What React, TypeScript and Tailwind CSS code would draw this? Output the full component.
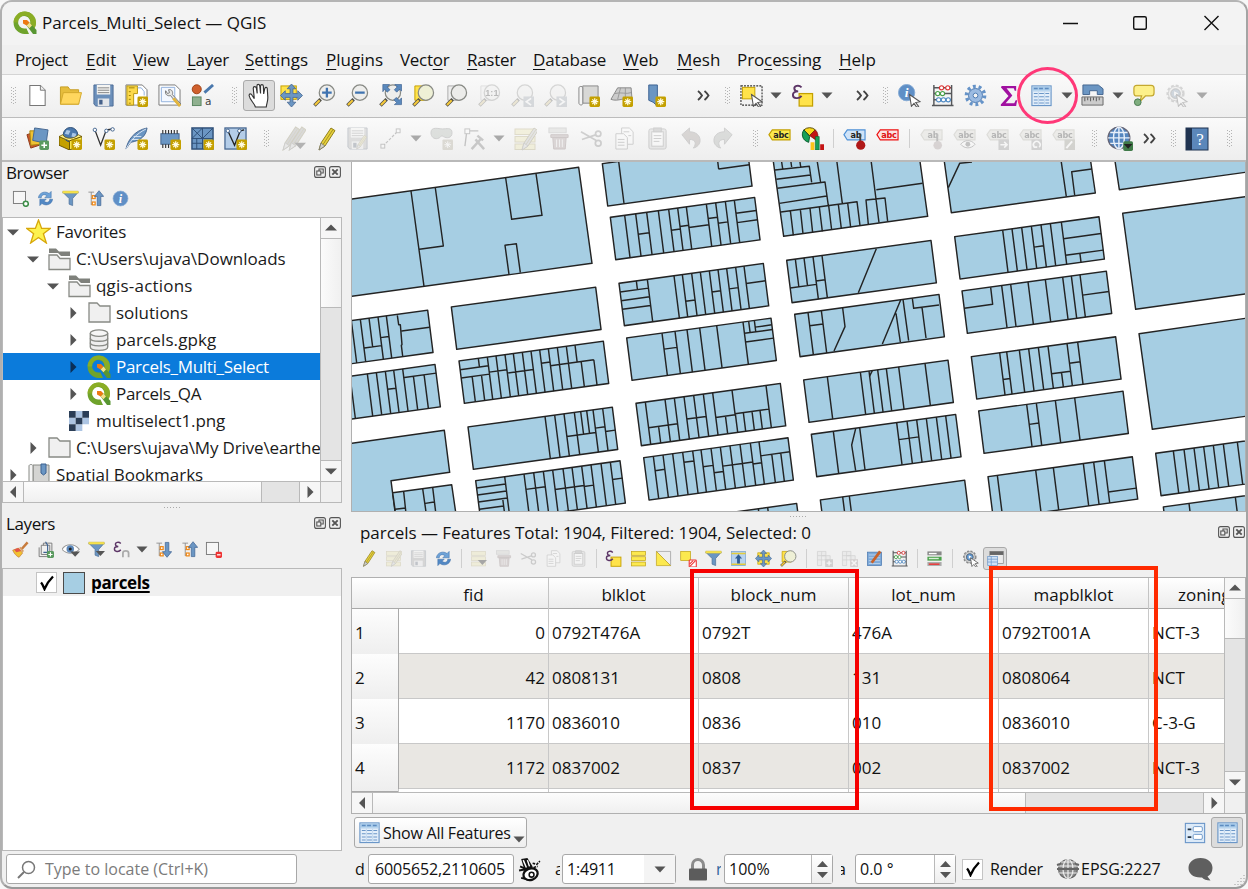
import React from "react";

type V = number | [number, number, number];
type Block = [number, number, V[], [number, number, number][]?];

const BLUE = "#6b96c3";
const GREY = "#888a85";

/* ---------- shared drawing pieces ---------- */

function Ic({ s = 24, dim = false, children, className = "" }: { s?: number; dim?: boolean; children: React.ReactNode; className?: string }) {
  return (
    <svg width={s} height={s} viewBox="0 0 24 24" fill="none" className={`shrink-0 ${dim ? "opacity-30 grayscale-[.6]" : ""} ${className}`}>
      {children}
    </svg>
  );
}
const Badge = () => (
  <g>
    <rect x="13" y="13" width="11" height="11" rx="1.5" fill="#c4a000" />
    <path d="M18.5 14.8v7.4M14.8 18.5h7.4M16 16l5 5M21 16l-5 5" stroke="#fffbe0" strokeWidth="1.3" />
  </g>
);
const Lens = ({ children, fill = "#eeeeec" }: { children?: React.ReactNode; fill?: string }) => (
  <g>
    <path d="M1.500 22.500l6.500-6.500" stroke="#4b4b48" strokeWidth="3.600" />
    <path d="M2 22l5-5" stroke="#f5c93a" strokeWidth="2.2" />
    <circle cx="14.500" cy="9" r="8" fill={fill} stroke={GREY} strokeWidth="1.300" />
    {children}
  </g>
);
const Pencil = ({ c = "#e8d13c" }: { c?: string }) => (
  <g>
    <path d="M5 23l2-7L17 1l4 2.600L11 19z" fill={c} stroke="#8f7f1e" strokeWidth="1" />
    <path d="M5 23l2-7 4 3z" fill="#cfcfca" stroke="#77776f" strokeWidth=".8" />
    <path d="M9 17.500L19 2.500" stroke="#9a8a20" strokeWidth=".9" />
  </g>
);
const Wrap = ({ children, t }: { children: React.ReactNode; t: string }) => <g transform={t}>{children}</g>;
const Floppy = ({ c = "#6b8fba" }: { c?: string }) => (
  <g>
    <path d="M2 1h20v22H4l-2-2z" fill={c} stroke="#4d6c96" />
    <path d="M5 1h14v10H5z" fill="#f4f4f2" />
    <path d="M6 4h12M6 6.500h12M6 9h12" stroke="#777" strokeWidth=".9" />
    <path d="M6 15h12v8H6z" fill="#e3e6ea" />
    <path d="M7.500 16.500h3.500v5H7.500z" fill="#45618a" />
  </g>
);
const TableIc = () => (
  <g>
    <rect x="2" y="2" width="20" height="20.500" fill="#e4effa" stroke="#6a96c8" strokeWidth="1.200" />
    <rect x="2.600" y="2.600" width="18.800" height="4.400" fill="#a8cbea" />
    <path d="M4 4.800h4M9.500 4.800h4M15.500 4.800h4" stroke="#5e8cc0" strokeWidth="1.600" />
    <path d="M4 10h4M4 13.300h4M4 16.600h4M4 19.800h4M9.500 10h5M9.500 13.300h5M9.500 16.600h5M9.500 19.800h5M16 10h4M16 13.300h4M16 16.600h4M16 19.800h4" stroke="#6a96c8" strokeWidth="1.100" />
    <path d="M2 7.600h20M8.800 8v14M15.200 8v14" stroke="#b6d0ea" strokeWidth=".7" />
  </g>
);
const Abacus = () => (
  <g>
    <path d="M3 1v22M21.500 1v22M1 22.500h22.500M3 4h18M3 10h18M3 16.500h18" stroke="#55575a" strokeWidth="1.500" />
    <g fill="#fff" strokeWidth="1.200">
      <g stroke="#d33"><ellipse cx="11" cy="4" rx="2.200" ry="2.200" /><ellipse cx="17.500" cy="4" rx="2.200" ry="2.200" /></g>
      <g stroke="#4aa04a"><ellipse cx="7" cy="10" rx="2.200" ry="2.200" /><ellipse cx="12" cy="10" rx="2.200" ry="2.200" /></g>
      <g stroke="#4f8ac4"><ellipse cx="8" cy="16.500" rx="2.300" ry="2.200" /><ellipse cx="13" cy="16.500" rx="2.300" ry="2.200" /><ellipse cx="18" cy="16.500" rx="2.200" ry="2.200" /></g>
    </g>
  </g>
);
const Tag = ({ fill, stroke, text, tc = "#222" }: { fill: string; stroke: string; text: string; tc?: string }) => (
  <g>
    <path d="M1 8l3.500-5H23v10.500H4.500z" fill={fill} stroke={stroke} strokeWidth="1.200" />
    <text x="13.500" y="11" textAnchor="middle" fontSize="8.500" fontWeight="700" fontFamily="DejaVu Sans, sans-serif" letterSpacing="-.3" fill={tc}>{text}</text>
  </g>
);
const Arrow = ({ d = false }: { d?: boolean }) => (
  <svg width="12" height="7" viewBox="0 0 12 7" className="shrink-0">
    <path d="M.5.500h11L6 6.500z" fill={d ? "#a9a9a9" : "#555"} />
  </svg>
);
const Chev = () => (
  <svg width="13" height="11" viewBox="0 0 13 11" fill="none" className="shrink-0">
    <path d="M1 1c2 1.500 3 3 4 4.500-1 1.500-2 3-4 4.500M7.500 1c2 1.500 3 3 4 4.500-1 1.500-2 3-4 4.500" stroke="#444" strokeWidth="1.900" />
  </svg>
);
const Grip = () => (
  <svg width="5" height="17" viewBox="0 0 5 17" className="shrink-0">
    <path d="M.5 0v17M2.500 1v16M4.500 0v17" stroke="#b4b4b4" strokeWidth="1" strokeDasharray="1 2" fill="none" />
  </svg>
);
const Dots = () => (
  <svg width="17" height="3" viewBox="0 0 17 3">
    <path d="M0 1.500h17" stroke="#aaa" strokeDasharray="1 2" />
  </svg>
);
const Cursor = () => <path d="M12 11l11 7.500-4.500.800 3 4-1.800 1.200-3-4.200-2.700 3z" fill="#fff" stroke="#555" strokeWidth="1.100" />;
const Refresh = () => (
  <g>
    <path d="M2 11C3 3 12 1 17 5l3-3v9h-9l3-3c-4-3-8-1-8 3z" fill="#6ea3d8" stroke="#3f72ab" strokeWidth=".8" />
    <path d="M22 13c-1 8-10 10-15 6l-3 3v-9h9l-3 3c4 3 8 1 8-3z" fill="#5288c4" stroke="#3f72ab" strokeWidth=".8" />
  </g>
);
const Funnel = () => (
  <g>
    <path d="M1 3h22l-8 9v10l-5-2v-8z" fill="#6b96c3" stroke="#4d7099" />
    <path d="M1 1.500h22v3H1z" fill="#fce94f" stroke="#c9b33a" strokeWidth=".6" />
  </g>
);
const EpsSel = () => (
  <g>
    <rect x="8.500" y="10" width="14" height="13" fill="#ffe34a" stroke="#c4a000" strokeWidth="1.300" />
    <path d="M11 3.500C8 .500 3 2 3.500 5c.3 2 2 2.700 4 2.700-3 0-5.500 1-5.500 3.700 0 4 6.500 4.500 9 1" stroke="#5c3566" strokeWidth="2" />
  </g>
);
const PanArrows = () => (
  <path d="M12 0l4.500 5h-3v5h5V7l5 5-5 5v-3h-5v5h3L12 24l-4.500-5h3v-5h-5v3l-5-5 5-5v3h5V5h-3z" fill={BLUE} stroke="#44658f" strokeWidth=".8" />
);
const Rows = () => (
  <g fill="#fce94f" stroke="#bfa21a"><rect x="2" y="2" width="20" height="5.500" /><rect x="2" y="9.500" width="20" height="5.500" /><rect x="2" y="17" width="20" height="5.500" /></g>
);
const Trash = () => (
  <g fill="#b98d8d" stroke="#8f5f5f"><rect x="2" y="1" width="18" height="5" fill="#c9c9c0" stroke="#999" /><path d="M4 8h18v3H4zM6 11h14l-1 12H7z" /><path d="M10 13v8M13 13v8M16 13v8" stroke="#eee" /></g>
);
const Scissors = () => (
  <g stroke="#777" strokeWidth="1.800"><path d="M1 5l16 9M2 13l15-5" /><circle cx="19" cy="7" r="2.800" /><circle cx="19" cy="17" r="3" /></g>
);
const Copy = () => (
  <g fill="#fff" stroke="#777"><path d="M9 1h8l4 4v13H9z" /><path d="M3 7h8l4 4v12H3z" /><path d="M5 13h7M5 16h7M5 19h7M11 5h6M16 9h3" /></g>
);
const Paste = () => (
  <g fill="#fff" stroke="#777"><rect x="3" y="2" width="18" height="21" rx="2" fill="#ccc" /><rect x="6" y="5" width="12" height="15" /><rect x="8" y="1" width="8" height="4" fill="#999" /><path d="M8 9h8M8 12h8M8 15h6" /></g>
);
const ActGear = () => (
  <g>
    <circle cx="11" cy="10" r="8.500" fill="#dfe6ee" stroke="#888" strokeWidth="2" strokeDasharray="3 2" />
    <circle cx="11" cy="10" r="7.500" fill="#e6e6e6" stroke="#888" />
    <circle cx="11" cy="10" r="5" fill="#5c95cf" stroke="#555" /><path d="M9.500 7.500l4.500 2.500-4.500 2.500z" fill="#fff" />
    <Cursor />
  </g>
);
const TreeMark = () => (
  <g><path d="M2 3h8M6 3v18M6 12h5M6 20h5" stroke="#888" strokeWidth="1.200" /><rect x="7.500" y="8" width="4" height="4" fill="#fff" stroke="#f08a1a" strokeWidth="1.800" /><rect x="7.500" y="17" width="4" height="4" fill="#fff" stroke="#f08a1a" strokeWidth="1.800" /></g>
);
const UpArrow = () => <path d="M17 1l6.500 8h-4v13h-5V9h-4z" fill={BLUE} stroke="#3d6292" />;
const QLogo = ({ s = 24 }: { s?: number }) => (
  <Ic s={s}>
    <path d="M16 23H11.500A11.200 11.200 0 1 1 23 11.500c0 2.500-.6 4.300-1.800 6l-4.200-4a6.200 6.200 0 1 0-5.500 4h2z" fill="#6fa32c" />
    <path d="M11.500.600A11 11 0 0 1 23 11.500c0 2.500-.6 4.300-1.800 6l-4.200-4a6.200 6.200 0 1 0-11.700-2H.500A11 11 0 0 1 11.500.600z" fill="#93b023" fillOpacity=".75" />
    <path d="M12.500 13l4-1.500L23.500 19v4H20z" fill="#589632" />
    <path d="M10 9h4l2.500 2.600-2.800 2.900L10 12.500z" fill="#ee7913" />
    <path d="M13.700 14.500l2.800-2.900 2.500 2.900-2.600 2.800z" fill="#f5df8a" />
  </Ic>
);

/* ---------- toolbar cells ---------- */

const C = ({ children, className = "w-[33px]" }: { children?: React.ReactNode; className?: string }) => (
  <div className={`flex shrink-0 items-center justify-center ${className}`}>{children}</div>
);
const I = ({ children, dim }: { children: React.ReactNode; dim?: boolean }) => (
  <C><Ic s={23} dim={dim}>{children}</Ic></C>
);

function Toolbar1() {
  return (
    <div className="flex h-[43px] shrink-0 items-center border-b border-[#bcbcbc] bg-gradient-to-b from-[#fafafa] to-[#eeeeee] pb-px">
      <C className="w-[19px] pl-[3px]"><Grip /></C>
      <I><path d="M4 1.500h11l5 5V22.500H4z" fill="#fff" stroke="#777" strokeWidth="1.100" /><path d="M15 1.500v5h5" stroke="#777" fill="#eee" /></I>
      <I><path d="M1.500 3h8l2 3h9v15h-19z" fill="#e6bd3c" stroke="#c79e25" /><path d="M4.500 9h19l-3 12h-19z" fill="#ffd75e" stroke="#d3a92d" /></I>
      <I><Floppy /></I>
      <I><path d="M1 1h17l5 5v16H1z" fill="#fff" stroke="#777" /><path d="M2 2h11v8H9v12H2z" fill="#fcd94a" stroke="#b8960a" /><path d="M4 4h6M4 8h2M4 12h2M4 16h2M4 20h2" stroke="#9c7e08" /><path d="M13 4h4l3 4v4" stroke="#8fb0dc" /><Badge /></I>
      <I><path d="M1 1h17l5 5v16H1z" fill="#fff" stroke="#777" /><path d="M3.500 3.500h14v15h-14z" stroke="#8fb0dc" fill="#f4f8ff" /><path d="M8 7c-1 4 2 6 5 5l9 11 2-2-9-10c1-3-1-6-4-5l1 3-2 1z" fill="#e8e8e6" stroke="#777" /><path d="M16 15l7 8" stroke="#e3b53c" strokeWidth="3" /></I>
      <I><circle cx="6" cy="5.500" r="4.700" fill="#d0602d" stroke="#a04418" /><path d="M14 9l9-8" stroke="#4a78ad" strokeWidth="3" /><rect x="1.500" y="13.500" width="9" height="9" fill="#8fb08f" stroke="#5a8560" /><text x="14.500" y="22" fontSize="11" fill="#444" fontFamily="DejaVu Sans, sans-serif">a</text></I>
      <C className="w-[24px] pl-[6px]"><Grip /></C>
      <C className="h-[31px] w-[32px] rounded-[3px] border border-[#a9a9a9] bg-[#dcdcdc]">
        <Ic s={25}><path d="M8 23c-1-4-5-6-6-11 0-2 2-2 3 0l2 3-1-10c0-2 2.500-2 3 0l.8 5L9.500 3c0-2.200 2.500-2.200 2.800 0l.7 7V3c.2-2 2.500-1.700 2.700 0l.3 7.500 1-5c.5-2 2.700-1.500 2.500.5L20 14c0 4-1 5-1.500 9z" fill="#fff" stroke="#333" strokeWidth="1.100" /></Ic>
      </C>
      <I><rect x="1" y="2" width="16" height="14" fill="#ffe34a" stroke="#c4a000" /><PanArrows /></I>
      <I><Lens><path d="M14.500 4v10M9.500 9h10" stroke="#3f73b0" strokeWidth="2.400" /></Lens></I>
      <I><Lens><path d="M9.500 9h10" stroke="#3f73b0" strokeWidth="2.400" /></Lens></I>
      <I><Lens /><g fill="#5a89bd" stroke="#3d6292" strokeWidth=".7"><path d="M4 .500h7L8.500 3l3 3-3 2.500-2.500-3L4 8z" /><path d="M23.500.500h-7L19 3l-3 3 2.500 2.500 3-3 2 2z" /><path d="M23.500 21.500v-7L21 17l-3-3-2.500 2.500 3 3-2.500 2z" /></g></I>
      <I><path d="M3 2h13v15H3z" fill="#ffe34a" stroke="#c4a000" /><Lens fill="#eef0d6" /></I>
      <I><path d="M3 2h13v15H3z" fill="#eee" stroke="#aaa" /><Lens fill="#ececea" /></I>
      <I dim><path d="M3 2h13v15H3z" fill="#eee" stroke="#aaa" /><Lens /><text x="14.500" y="12.500" textAnchor="middle" fontSize="9.500" fontWeight="700" fill="#333" fontFamily="Liberation Sans">1:1</text></I>
      <I dim><Lens /><path d="M13 13h11v11H13z" fill="#8ba0b8" /><path d="M21 15l-5 3.500 5 3.500" stroke="#fff" strokeWidth="1.800" /></I>
      <I dim><Lens /><path d="M13 13h11v11H13z" fill="#8ba0b8" /><path d="M16 15l5 3.500-5 3.500" stroke="#fff" strokeWidth="1.800" /></I>
      <I><path d="M6 2h16v18H6z" fill="#d8d8d6" stroke="#888" /><path d="M2 4c0-2 4-2 4 0v16c0 3-4 2-4 0z" fill="#f4f4f4" stroke="#888" /><Badge /></I>
      <I><path d="M1 16L8 4h14l1 12c-6-3-15 3-22 0z" fill="#ccc" stroke="#888" /><path d="M5 10c6-2 12 1 17-1M11 4L8 16M16 4v11" stroke="#999" /><Badge /></I>
      <I><path d="M6 1h9v22l-4.500-4-4.500-2z" fill={BLUE} stroke="#3d6292" /><Badge /></I>
      <C className="ml-4 w-8"><Chev /></C>
      <C className="w-4"><Grip /></C>
      <I><rect x="1" y="2" width="22" height="20" stroke="#333" strokeWidth="1.200" strokeDasharray="2 1.200" /><rect x="2.500" y="3.500" width="13" height="12" fill="#ffe34a" stroke="#c4a000" /><Cursor /></I>
      <C className="w-4"><Arrow /></C>
      <C className="w-[36px]"><Ic s={23}><EpsSel /></Ic></C>
      <C className="w-[14px]"><Arrow /></C>
      <C className="ml-3 w-8"><Chev /></C>
      <C className="w-[15px]"><Grip /></C>
      <I><circle cx="9" cy="9" r="8.500" fill="#5f8fc6" stroke="#86abd4" /><text x="9" y="14" textAnchor="middle" fontSize="14" fontStyle="italic" fontWeight="700" fontFamily="Liberation Serif" fill="#fff">i</text><Cursor /></I>
      <I><Abacus /></I>
      <I><circle cx="12" cy="12" r="9.500" stroke="#6593c8" strokeWidth="3.600" strokeDasharray="3 2.970" /><circle cx="12" cy="12" r="7.300" fill="#9bbbe2" stroke="#4a78b0" /><circle cx="12" cy="12" r="2.500" fill="#f4f4f4" stroke="#4a78b0" /></I>
      <I><path d="M5 2h15v5h-1.500l-1-2.500H10l6 7.500-7 8h9l1.500-3H21l-1 6H4v-1.500l8-9L4 3.500z" fill="#a010a0" /></I>
      <I><TableIc /></I>
      <C className="w-[18px]"><Arrow /></C>
      <I><path d="M2 1h16l5 4v6h-6V7H9v4H2z" fill={BLUE} stroke="#44658f" /><path d="M1 13.500h22v8.500H1z" fill="#ccc" stroke="#666" /><path d="M4 14v4M7 14v3M10 14v4M13 14v3M16 14v4M19 14v3" stroke="#555" /></I>
      <C className="w-[18px]"><Arrow /></C>
      <I><path d="M5 1.500h15c2.500 0 3 1 3 3v5c0 2-1 3-3 3h-6l-6 6 2-6H5c-2 0-3-1-3-3v-5c0-2 1-3 3-3z" fill="#fdf08a" stroke="#c4a830" strokeWidth="1.300" /><circle cx="6" cy="19" r="3.500" fill="#7fae7f" stroke="#4a7a50" /></I>
      <I dim><ActGear /></I>
      <C className="w-[18px]"><Arrow d /></C>
    </div>
  );
}

const Sep = ({ className = "w-[23px]" }: { className?: string }) => (
  <C className={className}><div className="h-[19px] w-px bg-[#cfcfcf]" /></C>
);

function Toolbar2() {
  return (
    <div className="flex h-[44px] shrink-0 items-center border-b-2 border-[#b9b9b9] bg-gradient-to-b from-[#fafafa] to-[#eeeeee] pb-px">
      <C className="w-[19px] pl-[3px]"><Grip /></C>
      <I><path d="M1 8l9-3 4 14-9 3z" fill="#c8582b" stroke="#8e3b18" /><path d="M4 4l10 0 1 14-10 1z" fill="#f0c232" stroke="#a8850f" /><path d="M9 1l14 2-2 14-14-3z" fill={BLUE} stroke="#44658f" /><rect x="14" y="14" width="10" height="10" rx="1.500" fill="#5a9a5f" /><path d="M19 16v6M16 19h6" stroke="#fff" strokeWidth="1.600" /></I>
      <I><path d="M0 10l11 4v10L0 19z" fill="#c4a000" stroke="#6a5500" /><circle cx="12" cy="8" r="7.500" fill="#4a78ad" stroke="#2d4d75" /><path d="M8 3l4 1-2 4-4-1zM14 6l4 1-1 4-4-1z" fill="#a9c6e6" /><path d="M0 10l4-2c2 5 12 5 16 0l4 2-13 4.500z" fill="#fdf08a" stroke="#6a5500" strokeWidth=".8" /><path d="M11 14.500L24 10v9l-13 5z" fill="#fce94f" stroke="#6a5500" /><Badge /></I>
      <I><path d="M3 3l6 16 6-16 7-1" stroke="#333" strokeWidth="1.400" /><path d="M14 3h8" stroke="#333" strokeDasharray="2 1" /><g fill="#fff" stroke="#44658f"><circle cx="3" cy="3" r="1.800" /><circle cx="15" cy="4" r="1.800" /><circle cx="21.500" cy="2.500" r="1.800" /></g><Badge /></I>
      <I><path d="M1 23C3 14 9 4 23 1c-1 8-6 13-17 15z" fill={BLUE} stroke="#44658f" /><path d="M1 23C6 14 12 7 22 2M9 10h8M7 13h8" stroke="#dce8f6" /><Badge /></I>
      <I><rect x="3" y="7" width="19" height="11" fill={BLUE} stroke="#44658f" /><path d="M5 3v4M8 3v4M11 3v4M14 3v4M17 3v4M20 3v4M5 18v4M8 18v4M11 18v4" stroke="#333" strokeWidth="1.200" /><Badge /></I>
      <I><rect x="1" y="1" width="22" height="22" fill={BLUE} stroke="#2f4f77" strokeWidth="1.500" /><path d="M12 1v22M1 12h22M1 1l11 11M12 1L1 12M12 12L23 1M1 17h11M6 12v11" stroke="#2f4f77" /><Badge /></I>
      <I><rect x="1" y="1" width="22" height="22" fill="#b4cde8" stroke="#44658f" strokeWidth="1.300" /><path d="M4 4l7 15 6-15 4-1" stroke="#222" strokeWidth="1.400" /><g fill="#fff" stroke="#44658f"><circle cx="4" cy="4" r="1.800" /><circle cx="16" cy="4" r="1.800" /></g><Badge /></I>
      <C className="w-[24px] pl-[5px]"><Grip /></C>
      <C className="w-[35px]"><Ic s={25} dim><Wrap t="translate(-3,0)"><Pencil c="#999" /></Wrap><Wrap t="translate(3,0)"><Pencil c="#999" /></Wrap><path d="M13 16h11l-5.500 6z" fill="#222" /></Ic></C>
      <C className="w-[30px]"><Ic s={24}><Pencil /></Ic></C>
      <I dim><Floppy c="#aaa" /><Wrap t="translate(8,8) scale(.65)"><Pencil /></Wrap></I>
      <I dim><path d="M4 20L20 4" stroke="#555" strokeWidth="1.200" strokeDasharray="3 1.500" /><g fill="#fff" stroke="#555"><rect x="2" y="18" width="4" height="4" /><rect x="18" y="2" width="4" height="4" /></g></I>
      <C className="w-[18px]"><Arrow d /></C>
      <I dim><path d="M1 6c0-7 8-4 12-4s10-2 10 4-6 6-9 4-2 1-6 2S1 10 1 6z" fill="#9ab0a0" stroke="#777" /><rect x="13" y="13" width="11" height="11" rx="1" fill="#b0a070" /><path d="M18.500 15v7M15 18.500h7M16 16l5 5M21 16l-5 5" stroke="#fff" /></I>
      <I dim><path d="M4 4h12M4 4L2 20" stroke="#555" strokeWidth="1.400" /><rect x="2" y="2" width="5" height="5" fill="#fff" stroke="#555" /><path d="M9 23L19 12M13 13l9 10M15 9l6 5" stroke="#666" strokeWidth="2.600" /></I>
      <C className="w-[16px]"><Arrow d /></C>
      <C className="w-[35px]"><Ic s={24} dim><Rows /><Wrap t="translate(4,0)"><Pencil c="#bbb" /></Wrap></Ic></C>
      <I dim><Trash /></I>
      <I dim><Scissors /></I>
      <I dim><Copy /></I>
      <I dim><Paste /></I>
      <I dim><path d="M3 9l8-7v4c7 0 11 4 11 9 0 4-3 7-7 8 3-4 3-9-4-9v5z" transform="translate(0,-1)" fill="#a08a80" stroke="#777" /></I>
      <I dim><path d="M21 9l-8-7v4C6 6 2 10 2 15c0 4 3 7 7 8-3-4-3-9 4-9v5z" transform="translate(0,-1)" fill="#9aa59a" stroke="#777" /></I>
      <C className="w-[23px] pl-[8px]"><Grip /></C>
      <I><Tag fill="#fce94f" stroke="#c4a000" text="abc" /></I>
      <I><path d="M9 9L3 3a9 9 0 0 1 12 0z" fill="#f8d91c" stroke="#5a4a00" /><path d="M9 9l6-6a8 8 0 0 1 1 11z" fill="#c41414" stroke="#600" strokeWidth=".6" /><path d="M9 10L3 3C0 7 1 14 8 16z" fill="#18a058" stroke="#0a5a2c" /><path d="M10 16h4v8h-4z" fill="#fcc419" /><path d="M15 10h4v14h-4z" fill="#18a058" stroke="#0a5a2c" strokeWidth=".6" /><path d="M20 18h4v6h-4z" fill="#c41414" /></I>
      <Sep className="w-[9px]" />
      <I><Tag fill="#cfe3f8" stroke="#4d90d6" text="ab" /><path d="M18 7v9" stroke="#444" strokeWidth="2" /><circle cx="18.500" cy="19" r="4.800" fill="#b01818" /></I>
      <I><Tag fill="#fbe3e3" stroke="#ee1111" text="abc" tc="#e01010" /></I>
      <Sep className="w-[11px]" />
      <I dim><Tag fill="#d8d6c0" stroke="#aaa68a" text="ab" /><path d="M18 7v9" stroke="#444" strokeWidth="2" /><circle cx="18.500" cy="19" r="4.500" fill="#a88" /></I>
      <I dim><Tag fill="#d8d6c0" stroke="#aaa68a" text="abc" /><path d="M8 18c4-5 11-5 15 0-4 5-11 5-15 0z" fill="#fff" stroke="#555" /><circle cx="15.500" cy="18" r="2.500" fill="#555" /></I>
      <I dim><Tag fill="#d8d6c0" stroke="#aaa68a" text="abc" /><rect x="13" y="13" width="11" height="11" fill="#888" /><path d="M15 18.500h7M19 15.500l3 3-3 3" stroke="#fff" strokeWidth="1.600" /></I>
      <I dim><Tag fill="#d8d6c0" stroke="#aaa68a" text="abc" /><rect x="13" y="13" width="11" height="11" fill="#888" /><path d="M16 21a3.500 3.500 0 1 1 5 0M15 18l1 3h3" stroke="#fff" strokeWidth="1.600" /></I>
      <I dim><Tag fill="#d8d6c0" stroke="#aaa68a" text="abc" /><rect x="13" y="13" width="11" height="11" fill="#8f8c70" /><path d="M15 22l6-7" stroke="#fff" strokeWidth="2" /></I>
      <C className="w-[24px] pl-[5px]"><Grip /></C>
      <C className="w-[31px]"><Ic s={26}><circle cx="11" cy="11" r="10" fill="#5586bf" stroke="#667" strokeWidth="1.300" /><path d="M11 1v20M1 11h20M3 6h16M3 16h16" stroke="#e8f0fa" strokeWidth="1.300" /><ellipse cx="11" cy="11" rx="5" ry="10" stroke="#e8f0fa" strokeWidth="1.300" /><rect x="15" y="14" width="9" height="9" rx="1.500" fill="#3f7a48" /><path d="M15.500 16.500h8l-4 4.500z" fill="#222" /></Ic></C>
      <C className="w-[28px]"><Chev /></C>
      <C className="w-[20px]"><Grip /></C>
      <C className="w-[28px]"><Ic s={24}><rect x="1" y="1" width="22" height="22" fill="#5b87ba" stroke="#1f3350" /><path d="M1 1h6v22H1z" fill="#1f3350" /><text x="15" y="18" textAnchor="middle" fontSize="17" fontFamily="Liberation Serif" fill="#fff">?</text></Ic></C>
      <C className="w-[36px]"><Grip /></C>
    </div>
  );
}

/* ---------- map ---------- */

const colA: Block[] = [
  [-200, 510, [204, 231, [257, 0, 86], 284, 309], [[86, 232, 284], [62, 284, 309]]],
  [-178, 673, [178, 230, 257, 284, 309, 336, [365, 26, 127], [397, 26, 127]], [[54, 284, 309], [26, 338, 433]]],
  [304, 441, []],
  [327, 603, [[58, 0, 26], 85, [33, 50, 127], [61, 50, 127], 111, 138, 163, 190, 216, 242, 268, 295, 322, [348, 0, 51], [360, 51, 127], [398, 51, 127]], [[26, 0, 85], [51, 0, 85], [45, 85, 138], [55, 138, 216], [40, 242, 268], [51, 268, 398]]],
  [354, 801, [231, 260, 288, [319, 0, 127], [338, 0, 68], [356, 0, 68], 375, 404], [[68, 288, 375], [55, 375, 404], [69, 404, 433]]],
  [377, 962, [87, [73, 62, 127], 145, 174, 203, 231, 262, 289, 318, 346, 376, 404], [[22, 0, 87], [43, 0, 87], [64, 0, 87], [86, 0, 73], [46, 145, 203], [58, 231, 318], [61, 318, 346], [52, 404, 433]]],
];
const colB: Block[] = [
  [7, 11, [49, [341, 30, 63]], [[63, 341, 433]]],
  [31, 172, [43, 76, 109, 144, 175, 202, 228, 288, 316, 345, 372], [[61, 76, 109], [63, 175, 202], [55, 202, 228], [62, 228, 288], [43, 288, 316], [61, 316, 345], [39, 372, 433], [67, 372, 433]]],
  [57, 370, [[52, 0, 26], 85, 165, 190, 218, 244, 271, 297, 323, 350, 375], [[26, 0, 85], [52, 0, 85], [78, 0, 85], [80, 190, 218], [63, 271, 297], [61, 323, 350], [52, 375, 433]]],
  [80, 534, [106, 145, 181, 219, 270, 349, [366, 0, 34], [383, 0, 34]], [[48, 106, 145], [34, 349, 433], [60, 349, 433], [20, 383, 433]]],
  [108, 730, [28, 87, 115, 144, 173, 202, 230, [288, 0, 72], 390, [58, 77, 127], [259, 74, 127], [289, 70, 127], [313, 70, 127], [339, 70, 127], [363, 70, 127]], [[77, 28, 115], [67, 144, 202], [74, 230, 288], [71, 288, 390]]],
  [131, 893, [29, 58, 87, 117, 147, 172, 202, 230, 259, 289, 320, 346, [379, 42, 127], [406, 42, 127]], [[43, 29, 58], [30, 117, 147], [51, 172, 202], [73, 202, 230], [57, 230, 289], [57, 289, 320], [63, 320, 346], [42, 346, 433]]],
  [157, 1090, [318, 346]],
  [560, 301, [[26, 0, 82], [52, 0, 82], 79, 106], [[83, 0, 79], [73, 79, 106]]],
  [584, 463, [40, 80], [[40, 40, 80]]],
  [611, 660, [71, 170, 196, 222, 248, 285, 364]],
  [634, 823, [66, 145, 256, 287, 316, 345, 375, 403], [[51, 256, 316]]],
  [661, 1020, [67, 87]],
];
const colC: Block[] = [
  [134, 230, [144, 172, 201, 230, 259, 287, 320, [363, 100, 127]], [[63, 230, 259], [50, 320, 433], [100, 320, 433]]],
  [156, 393, [119, 146, 198, 250, 302, 328, 354], [[61, 354, 433]]],
  [184, 590, [85, 106, 144, 172, 201, 230, 287, 319, [260, 83, 127]], [[80, 85, 106], [83, 230, 287], [59, 287, 319]]],
  [206, 753, [144, 173, 230, 288], [[60, 144, 173]]],
  [234, 950, [28, 143, 196, 286, 317, 349], [[94, 349, 433]]],
  [737, 880, [53, 85, 115, 144, 173, 203, 245]],
  [760, 1041, [77, 216]],
];

const Blocks = ({ list }: { list: Block[] }) => (
  <>
    {list.map(([x, y, vs, hs = []]) => (
      <g key={`${x},${y}`} transform={`matrix(1 -0.1375 0.127 1 ${x} ${y})`}>
        <rect width="433" height="127" />
        <path
          d={
            vs.map((v) => (typeof v === "number" ? `M${v} 0V127` : `M${v[0]} ${v[1]}V${v[2]}`)).join("") +
            hs.map(([v, a, b]) => `M${a} ${v}H${b}`).join("")
          }
        />
      </g>
    ))}
  </>
);

function ParcelMap() {
  return (
    <svg width="893" height="349" viewBox="6 6 2679 1047" className="block shrink-0 bg-white" fill="#a6cee3" stroke="#232323" strokeWidth="4.300" strokeLinejoin="round">
      <path d="M-10 119L686 22L726 310L-10 411z" />
      <path fill="none" d="M183 93L222 379M256 84L280 258L208 268M467 54L485 178L576 166L558 41M477 343L465 256L499 251L511 338" />
      <path d="M-10 852L283 811L299 937L123 962L137 1070L-10 1070z" />
      <path d="M128 998L305 974L319 1070L138 1070z" />
      <path fill="none" d="M161 995l8 75M135 1048l32-4M218 986l10 70M248 982l9 74M226 1030l26-4" />
      <Blocks list={colA} />
      <path fill="none" d="M142 466l4 28h5l5 60-2 2 4 32M155 513L239 502" />
      <g transform="translate(750)">
        <path d="M518-10L551 229L983 169L958-10z" />
        <path fill="none" d="M525 30L628 19l7 48M529 58L631 45M532 85L675 66L685 137M538 130L680 108M543 156L771 125l9 72M544 0l4 26M572 0l3 21M599 0l3 20M651 0l11 68M710 0L727 130M813 0L837 188M829 89L968 70M805 193L798 120L855 114L863 184M571 152l9 74M601 148l8 73M630 145l8 73M658 141l9 73M686 137l9 73M715 133l9 73M743 129l9 73" />
        <Blocks list={colB} />
        <path fill="none" d="M829 266L775 398M728 444L735 500L702 573M902 420L847 552M888 460L901 546M909 418L926 542M937 415l4 30l76-10M966 442L978 534M808 650l9-18M767 806L755 855L767 932" />
      </g>
      <g transform="translate(1680)">
        <path d="M101-10L124 158L556 99L540-10z" />
        <path fill="none" d="M115 83L149 10L186 6M453 0L469 110M494 105L485 35L545 27" />
        <path d="M613-10L628 89L1020 35V-10z" />
        <path d="M638 160L1020 108V400L677 448z" />
        <path d="M687 521L1020 473V767L727 808z" />
        <Blocks list={colC} />
        <path fill="none" d="M163 445L248 433L242 382" />
      </g>
    </svg>
  );
}

/* ---------- docked panels ---------- */

const DockButtons = () => (
  <div className="flex gap-[3px]">
    <svg width="12" height="12" viewBox="0 0 12 12" fill="none" stroke="#555" strokeWidth="1.100"><rect x=".6" y=".6" width="10.800" height="10.800" rx="2" /><rect x="2.800" y="5" width="4" height="4" /><path d="M5 5V3h4.200v4H7" /></svg>
    <svg width="12" height="12" viewBox="0 0 12 12" fill="none" stroke="#555" strokeWidth="1.100"><rect x=".6" y=".6" width="10.800" height="10.800" rx="2" /><path d="M3.300 3.300l5.400 5.400M8.700 3.300L3.300 8.700" strokeWidth="1.900" /></svg>
  </div>
);

const Tri = ({ dir, c = "#555" }: { dir: "u" | "d" | "l" | "r"; c?: string }) => {
  const d = { u: "M0 8.500h12L6 2.500z", d: "M0 3.500h12L6 9.500z", l: "M9 0v12L3 6z", r: "M3.500 0v12l6-6z" }[dir];
  return <svg width="12" height="12" viewBox="0 0 12 12" className="shrink-0"><path d={d} fill={c} /></svg>;
};

const Folder = ({ open = false }: { open?: boolean }) => (
  <Ic s={24}>
    {open && <path d="M2 8V1.500h7l3 3h11V9h-9l-3-3H2z" fill="#7f817c" />}
    <path d={open ? "M2 8h8l3 3.500h10v11H2z" : "M2 2h8l3 3h10v16H2z"} fill="#f0f0f0" stroke={GREY} strokeWidth="1.300" />
  </Ic>
);

const S = ({ children, dim, className = "w-[25px]" }: { children: React.ReactNode; dim?: boolean; className?: string }) => (
  <C className={className}><Ic s={17} dim={dim}>{children}</Ic></C>
);

function TreeRow({ pad, tri, icon, label, sel, ls = "" }: { pad: string; tri?: "d" | "r"; icon: React.ReactNode; label: string; sel?: boolean; ls?: string }) {
  return (
    <div className={`flex h-[27px] shrink-0 items-center whitespace-nowrap ${pad} ${sel ? "bg-[#0b7bdb] text-white" : "text-[#1a1a1a]"}`}>
      <span className="flex w-[18px] shrink-0">{tri && <Tri dir={tri} c={sel ? "#0b2f57" : "#555"} />}</span>
      <span className="flex w-[27px] shrink-0 justify-center">{icon}</span>
      <span className={`pl-[4px] ${ls}`}>{label}</span>
    </div>
  );
}

function LeftColumn() {
  return (
    <div className="flex w-[349px] shrink-0 flex-col">
      <div className="flex h-[22px] w-[340px] shrink-0 items-center justify-between pl-1 pr-[1px]">
        <span className="tracking-[-0.5px]">Browser</span>
        <div className="-mt-[3px]"><DockButtons /></div>
      </div>
      <div className="flex h-[33px] shrink-0 items-center pb-[4px] pl-[6px]">
        <S><rect x="2" y="2" width="17" height="17" stroke="#777" strokeWidth="1.300" fill="#f6f6f6" /><circle cx="19.500" cy="19.500" r="3.500" fill="#fff" stroke="#3f8f4a" strokeWidth="2.200" /></S>
        <S><Refresh /></S>
        <S><Funnel /></S>
        <S><TreeMark /><UpArrow /></S>
        <S><circle cx="12" cy="12" r="10.500" fill="#5f8fc6" stroke="#86abd4" /><text x="12" y="18" textAnchor="middle" fontSize="17" fontStyle="italic" fontWeight="700" fontFamily="Liberation Serif" fill="#fff">i</text></S>
      </div>
      <div className="grid h-[286px] w-[340px] shrink-0 grid-cols-[317px_21px] grid-rows-[263px_21px] border border-[#b9b9b9]">
        <div className="flex flex-col overflow-hidden bg-white">
          <TreeRow pad="pl-[4px]" ls="tracking-[-0.2px]" tri="d" icon={<Ic s={25}><path d="M12 1l3 8h8.500l-6.800 5.200L19.500 23 12 17.800 4.500 23l2.800-8.800L.500 9H9z" fill="#fdf24f" stroke="#d8a80a" strokeWidth="1.300" /></Ic>} label="Favorites" />
          <TreeRow pad="pl-[24px]" tri="d" icon={<Folder open />} label="C:\Users\ujava\Downloads" />
          <TreeRow pad="pl-[44px]" ls="tracking-[0.2px]" tri="d" icon={<Folder open />} label="qgis-actions" />
          <TreeRow pad="pl-[64px]" tri="r" icon={<Folder />} label="solutions" />
          <TreeRow pad="pl-[64px]" ls="tracking-[0.1px]" tri="r" icon={<Ic s={22}><path d="M2.500 4.500v15c0 5 19 5 19 0v-15" fill="#eee" stroke={GREY} strokeWidth="1.500" /><ellipse cx="12" cy="4.500" rx="9.500" ry="3.500" fill="#f6f6f6" stroke={GREY} strokeWidth="1.500" /><path d="M2.500 10c0 4.500 19 4.500 19 0M2.500 15c0 4.500 19 4.500 19 0" stroke={GREY} strokeWidth="1.500" /></Ic>} label="parcels.gpkg" />
          <TreeRow pad="pl-[64px]" ls="tracking-[-0.3px]" tri="r" sel icon={<QLogo />} label="Parcels_Multi_Select" />
          <TreeRow pad="pl-[64px]" ls="tracking-[-0.3px]" tri="r" icon={<QLogo />} label="Parcels_QA" />
          <TreeRow pad="pl-[44px]" ls="tracking-[-0.1px]" icon={<svg width="20" height="20" viewBox="0 0 9 9"><path d="M0 0h9v9H0z" fill="#fff" /><path d="M3 0h3v3H3zM0 3h3v3H0zM6 3h3v3H6zM3 6h3v3H3z" fill="#adc5e3" /><path d="M0 0h3v3H0zM6 0h3v3H6zM3 3h3v3H3zM0 6h3v3H0z" fill="#2b3e57" /></svg>} label="multiselect1.png" />
          <TreeRow pad="pl-[24px]" ls="tracking-[-0.15px]" tri="r" icon={<Folder />} label="C:\Users\ujava\My Drive\earthen" />
          <TreeRow pad="pl-[4px]" tri="r" icon={<Ic s={24}><path d="M6 2h16v21H6z" fill="#d4d4d2" stroke={GREY} /><path d="M2 3c0-2 4-2 4 0v20H2z" fill="#f4f4f4" stroke={GREY} /><path d="M14 1h5v9l-2.500 2-2.500-2z" fill={BLUE} stroke="#3d6292" /></Ic>} label="Spatial Bookmarks" />
        </div>
        <div className="flex flex-col border-l border-[#b9b9b9] bg-[#e4e4e4]">
          <div className="flex h-[21px] items-center justify-center border-b border-[#b9b9b9] bg-[#f6f6f6]"><Tri dir="u" /></div>
          <div className="h-[69px] border-b border-[#b9b9b9] bg-gradient-to-r from-[#fbfbfb] to-[#f0f0f0]" />
          <div className="mt-auto flex h-[21px] items-center justify-center border-t border-[#b9b9b9] bg-[#f6f6f6]"><Tri dir="d" /></div>
        </div>
        <div className="flex border-t border-[#b9b9b9] bg-[#e4e4e4]">
          <div className="flex w-[21px] items-center justify-center border-r border-[#b9b9b9] bg-[#f6f6f6]"><Tri dir="l" /></div>
          <div className="w-[238px] border-r border-[#b9b9b9] bg-gradient-to-b from-[#fcfcfc] to-[#f0f0f0]" />
          <div className="ml-auto flex w-[21px] items-center justify-center border-l border-[#b9b9b9] bg-[#f6f6f6]"><Tri dir="r" /></div>
        </div>
        <div className="border-l border-t border-[#b9b9b9]" />
      </div>
      <div className="flex h-[9px] w-[341px] shrink-0 items-center justify-center"><Dots /></div>
      <div className="flex h-[24px] w-[340px] shrink-0 items-center justify-between pl-1 pr-[1px]">
        <span className="tracking-[-0.4px]">Layers</span>
        <div className="-mt-[3px]"><DockButtons /></div>
      </div>
      <div className="flex h-[32px] shrink-0 items-center pb-[5px] pl-[6px]">
        <S><path d="M1 13l8-3 6 7-5 6c-3-1-7-5-9-10z" fill="#f2c230" stroke="#c4803a" /><path d="M3 12l6-2 4 4-7 2z" fill="#e2554a" /><path d="M10 10l5 6 2-2-5-6z" fill="#d9a066" /><path d="M14 11L22 2" stroke="#c77b3c" strokeWidth="3.500" /></S>
        <S><path d="M6 6h12v13H6zM3 9v13h11M9 6V3h12v12" stroke="#777" strokeWidth="1.300" /><path d="M12 1l3 5v10H9" stroke="#3d6292" strokeWidth="1.600" /><rect x="14" y="14" width="10" height="10" rx="2" fill="#5a9a5f" /><path d="M19 16v6M16 19h6" stroke="#fff" strokeWidth="1.600" /></S>
        <C className="w-[26px]"><Ic s={18}><path d="M0 11C5 3 17 3 23 11 17 18 6 18 0 11z" fill="#fff" stroke="#999" strokeWidth="1.500" /><circle cx="11" cy="10.500" r="5" fill="#5b87ba" /><circle cx="11" cy="10.500" r="2" fill="#222" /><path d="M11 14h13l-6.500 7z" fill="#555" /></Ic></C>
        <S><Funnel /><path d="M11 14h13l-6.500 7z" fill="#555" /></S>
        <S><path d="M11 3.500C8 .500 3 2 3.500 5c.3 2 2 2.700 4 2.700-3 0-5.500 1-5.500 3.700 0 4 6.500 4.500 9 1" stroke="#5c3566" strokeWidth="2" /><path d="M14 23v-6c0-4 8-4 8 0v6" stroke="#aaa" strokeWidth="2.500" /></S>
        <C className="w-[15px]"><Arrow /></C>
        <S className="w-[29px]"><TreeMark /><g transform="matrix(1 0 0 -1 0 24)"><UpArrow /></g></S>
        <S className="w-[23px]"><TreeMark /><UpArrow /></S>
        <S><rect x="2" y="2" width="17" height="17" stroke="#777" strokeWidth="1.300" fill="#f6f6f6" /><rect x="15" y="15" width="9" height="9" rx="2" fill="#e33" /><path d="M17 19.500h5" stroke="#fff" strokeWidth="1.800" /></S>
      </div>
      <div className="h-[283px] w-[340px] shrink-0 border border-[#b9b9b9] bg-white">
        <div className="flex h-[27px] items-center bg-[#f0f0f0] pl-[33px]">
          <span className="flex h-[21px] w-[21px] items-center justify-center border border-[#c4c4c4] bg-white"><Check /></span>
          <span className="ml-[6px] h-[22px] w-[22px] border border-[#4a4a4a] bg-[#a6cee3]" />
          <span className="ml-[6px] font-bold tracking-[-0.35px] text-black underline decoration-[1.500px] underline-offset-[2px]">parcels</span>
        </div>
      </div>
    </div>
  );
}

const Check = () => (
  <svg width="16" height="16" viewBox="0 0 16 16" fill="none"><path d="M2 7.500c1.500 1.500 2.500 4 3.500 6.500C7.500 9 10.500 5 14 1.500" stroke="#000" strokeWidth="2.300" /></svg>
);

/* ---------- attribute table ---------- */

const rows = [
  ["1", "0", "0792T476A", "0792T", "476A", "0792T001A", "NCT-3"],
  ["2", "42", "0808131", "0808", "131", "0808064", "NCT"],
  ["3", "1170", "0836010", "0836", "010", "0836010", "C-3-G"],
  ["4", "1172", "0837002", "0837", "002", "0837002", "NCT-3"],
];
const heads = ["fid", "blklot", "block_num", "lot_num", "mapblklot"];
const cols = "grid w-[947px] grid-cols-[47px_150px_150px_150px_150px_150px_150px]";

function AttributeTable() {
  return (
    <div className="grid h-[237px] shrink-0 grid-cols-[872px_21px] grid-rows-[214px_21px] border border-[#b0b0b0]">
      <div className="overflow-hidden bg-white">
        <div className={`${cols} h-[31px] border-b border-[#a9a9a9] bg-gradient-to-b from-white to-[#ececec] text-center leading-[34px]`}>
          <span />
          {heads.map((h) => (
            <span key={h} className="border-r border-[#c4c4c4]">{h}</span>
          ))}
          <span className="pl-[29px] text-left">zoning</span>
        </div>
        {rows.map((r, i) => (
          <div key={r[0]} className={`${cols} h-[45px] border-b border-[#c8c8c8] leading-[47px] ${i % 2 ? "bg-[#e9e7e3]" : "bg-white"}`}>
            {r.map((t, j) => (
              <span key={j} className={j === 0 ? "-mb-px border-b border-r border-[#a9a9a9] bg-gradient-to-b from-[#fdfdfd] to-[#eeeeee] pl-[3px]" : j === 1 ? "border-r border-[#c8c8c8] pr-[3px] text-right" : "border-r border-[#c8c8c8] pl-[3px]"}>{t}</span>
            ))}
          </div>
        ))}
        <div className={`${cols} h-[4px]`}>
          {[0, 1, 2, 3, 4, 5, 6].map((j) => <span key={j} className="border-r border-[#c8c8c8]" />)}
        </div>
      </div>
      <div className="flex flex-col border-l border-[#b9b9b9] bg-[#e4e4e4]">
        <div className="flex h-[21px] items-center justify-center border-b border-[#b9b9b9] bg-[#f6f6f6]"><Tri dir="u" /></div>
        <div className="h-[40px] border-b border-[#b9b9b9] bg-gradient-to-r from-[#fbfbfb] to-[#f0f0f0]" />
        <div className="mt-auto flex h-[21px] items-center justify-center border-t border-[#b9b9b9] bg-[#f6f6f6]"><Tri dir="d" /></div>
      </div>
      <div className="flex border-t border-[#b9b9b9] bg-[#e4e4e4]">
        <div className="flex w-[21px] items-center justify-center border-r border-[#b9b9b9] bg-[#f6f6f6]"><Tri dir="l" /></div>
        <div className="w-[653px] border-r border-[#b9b9b9] bg-gradient-to-b from-[#fcfcfc] to-[#f0f0f0]" />
        <div className="ml-auto flex w-[21px] items-center justify-center border-l border-[#b9b9b9] bg-[#f6f6f6]"><Tri dir="r" /></div>
      </div>
      <div className="border-l border-t border-[#b9b9b9]" />
    </div>
  );
}

function TableToolbar() {
  return (
    <div className="flex h-[31px] shrink-0 items-center pb-[6px] pl-[5px]">
      <S><Pencil /></S>
      <S dim><Rows /><Wrap t="translate(4,0)"><Pencil /></Wrap></S>
      <S dim><Floppy c="#999" /></S>
      <S><Refresh /></S>
      <Sep className="w-[10px]" />
      <S dim><Rows /><path d="M11 14h13l-6.500 7z" fill="#000" /></S>
      <S dim><Trash /></S>
      <S dim><Scissors /></S>
      <S dim><Copy /></S>
      <S dim><Paste /></S>
      <Sep className="w-[10px]" />
      <S><EpsSel /></S>
      <S><Rows /></S>
      <S><path d="M2 2h20v20z" fill="#eee" stroke="#999" /><path d="M2 2v20h20z" fill="#fce94f" stroke="#bfa21a" /></S>
      <S><rect x="1" y="2" width="14" height="13" fill="#fce94f" stroke="#bfa21a" /><rect x="13" y="14" width="10" height="10" rx="1" fill="#fff" stroke="#e33" strokeWidth="1.500" /><path d="M14 23l8-8M13.500 20l5-5" stroke="#e33" strokeWidth="1.500" /></S>
      <S><Funnel /></S>
      <S><rect x="2" y="2" width="20" height="20" fill="#b8d2ee" stroke="#7ba3d0" /><path d="M2 5h20M2 20h20" stroke="#e3cc3a" strokeWidth="2" /><path d="M12 6l5 6h-3v7h-4v-7H7z" fill="#2f5c94" /></S>
      <S><g fill="#ffe34a" stroke="#c4a000"><rect x="4" y="4" width="16" height="16" /></g><PanArrows /></S>
      <S><path d="M3 2h13v15H3z" fill="#ffe34a" stroke="#c4a000" /><Lens fill="#eef0d6" /></S>
      <Sep className="w-[11px]" />
      <S dim><path d="M2 2h6v20H2zM8 2h6v20M8 8h12v12M2 8h12M2 14h12" fill="#ddd" stroke="#888" /><rect x="13" y="13" width="11" height="11" fill="#888" /><path d="M18.500 15v7M15 18.500h7" stroke="#fff" strokeWidth="2" /></S>
      <S dim><path d="M2 2h6v20H2zM8 2h6v20M8 8h12v12M2 8h12M2 14h12" fill="#ddd" stroke="#888" /><rect x="13" y="13" width="11" height="11" fill="#a88" /><path d="M15 15l7 7M22 15l-7 7" stroke="#fff" strokeWidth="2" /></S>
      <S><rect x="2" y="3" width="20" height="19" fill="#7da9d8" stroke="#4a78b0" /><path d="M4 7h16M4 11h16M4 15h16M4 19h16" stroke="#cfe0f3" /><path d="M8 18L20 2" stroke="#c8622a" strokeWidth="4" /></S>
      <S><Abacus /></S>
      <Sep className="w-[10px]" />
      <S><rect x="2" y="2" width="20" height="5.500" fill="#888" /><path d="M4 5h11" stroke="#fff" strokeWidth="2" /><rect x="2" y="9.500" width="20" height="5.500" fill="#4aa04a" /><path d="M4 12h14" stroke="#d7f0d7" strokeWidth="2" /><rect x="2" y="17" width="20" height="5.500" fill="#aaa" /><path d="M4 20h15" stroke="#e33" strokeWidth="2" /></S>
      <Sep className="w-[11px]" />
      <S><ActGear /></S>
      <C className="h-[23px] w-[24px] rounded-[3px] border border-[#a9a9a9] bg-[#dcdcdc]"><Ic s={17}><rect x="4" y="2" width="19" height="17" fill="#ececec" stroke="#888" /><rect x="4" y="2" width="19" height="5" fill="#666" /><rect x="1" y="9" width="14" height="13" fill="#cfe1f5" stroke="#6a96c8" /><path d="M1 13h14M6 9v13M1 17h14" stroke="#6a96c8" /></Ic></C>
    </div>
  );
}

const field = "flex h-[30px] shrink-0 items-center rounded-[3px] border border-[#a8a8a8] bg-white";
const Spin = () => (
  <span className="ml-auto flex h-full w-[21px] flex-col items-center justify-center gap-[5px] border-l border-[#b9b9b9] bg-gradient-to-b from-white to-[#eeeeee]">
    <svg width="11" height="6" viewBox="0 0 11 6"><path d="M0 6h11L5.500 0z" fill="#555" /></svg>
    <svg width="11" height="6" viewBox="0 0 11 6"><path d="M0 0h11L5.500 6z" fill="#555" /></svg>
  </span>
);

function StatusBar() {
  return (
    <div className="flex h-[36px] shrink-0 items-center overflow-hidden whitespace-nowrap pl-[4px] text-[16px]">
      <div className={`${field} w-[291px] pl-[10px] text-[#7b7b7b]`}>
        <svg width="19" height="19" viewBox="0 0 19 19" fill="none" stroke="#777" strokeWidth="1.500"><circle cx="11.500" cy="7.500" r="6" /><path d="M7 12l-6 6" strokeWidth="2" /></svg>
        <span className="ml-[9px]">Type to locate (Ctrl+K)</span>
      </div>
      <span className="ml-[58px] w-[13px]">d</span>
      <div className={`${field} w-[146px] pl-[6px] tracking-[-0.15px]`}>6005652,2110605</div>
      <C className="ml-[3px] w-[24px]">
        <Ic s={25}><path d="M4 2l6-1 5 8-2 4-6-1z" fill="#111" /><path d="M6 3l3 7M10 3l2 6" stroke="#fff" strokeWidth="1.400" /><path d="M2 13l5-1 3 2M3 9l4 2M12 22l-8-2" stroke="#111" strokeWidth="1.800" /><ellipse cx="13" cy="16.500" rx="7" ry="5.500" fill="#fff" stroke="#111" strokeWidth="2.200" transform="rotate(-20 13 16.500)" /><circle cx="14" cy="17" r="2.300" fill="#fff" stroke="#111" strokeWidth="1.500" /><path d="M15 6l4 1 3-3M16 10l4-1" stroke="#111" strokeWidth="1.500" strokeDasharray="2.500 1" /></Ic>
      </C>
      <span className="ml-[14px] w-[5px] overflow-hidden">a</span>
      <div className={`${field} ml-[2px] h-[27px] w-[114px] pl-[4px] tracking-[-0.2px]`}>1:4911
        <span className="ml-auto flex h-full w-[31px] items-center justify-center bg-[#f4f4f4]"><Arrow /></span>
      </div>
      <svg width="20" height="24" viewBox="0 0 20 24" fill="none" className="ml-[12px] shrink-0"><path d="M4.500 12V8a5.500 5.500 0 0 1 11 0v4" stroke="#8c8c8c" strokeWidth="3" /><rect x="1" y="11.500" width="18" height="12" rx="1" fill="#5c5c5c" /></svg>
      <span className="ml-[8px] w-[5px] overflow-hidden text-[#31639c]">r</span>
      <div className={`${field} ml-[3px] w-[109px] pl-[4px]`}>100%<Spin /></div>
      <span className="ml-[8px] w-[5px] overflow-hidden [direction:rtl]">a</span>
      <div className={`${field} ml-[9px] w-[101px] pl-[4px]`}>0.0 °<Spin /></div>
      <span className="ml-[6px] flex h-[21px] w-[21px] shrink-0 items-center justify-center border border-[#c4c4c4] bg-white"><Check /></span>
      <span className="ml-[7px] w-[66px] tracking-[-0.2px]">Render</span>
      <svg width="24" height="22" viewBox="0 0 24 22" fill="none" className="shrink-0" stroke="#666" strokeWidth="1.200"><circle cx="12" cy="11" r="9.500" fill="#8a8a8a" /><path d="M12 1v20M1 8h22M3 15h18M5 4h14" stroke="#eee" /><ellipse cx="12" cy="11" rx="5" ry="9.500" stroke="#eee" /><path d="M1 7l3-1M23 7l-3-1M1 11h22" strokeWidth="2" /></svg>
      <span className="ml-px w-[107px]">EPSG:2227</span>
      <svg width="25" height="23" viewBox="0 0 25 23" className="shrink-0"><path d="M12.500 0C20 0 24.500 4.500 24.500 10c0 4-2 7-5 8.500l3 4c-4 0-7-1-8.500-3C5 20 .500 15.500.500 10S5 0 12.500 0z" fill="#5f5f5f" /></svg>
      <svg width="14" height="14" viewBox="0 0 14 14" className="ml-[18px] self-end"><path d="M13 2v1M10 5v1M13 5v1M7 8v1M10 8v1M13 8v1M4 11v1M7 11v1M10 11v1M13 11v1" stroke="#aaa" strokeWidth="1.200" /></svg>
    </div>
  );
}

const menus: [string, string, string, string][] = [
  ["Pro", "j", "ect", "w-[71px] tracking-[-0.4px]"], ["", "E", "dit", "w-[47px]"], ["", "V", "iew", "w-[54px] tracking-[-0.2px]"], ["", "L", "ayer", "w-[58px] tracking-[-0.3px]"],
  ["", "S", "ettings", "w-[81px]"], ["", "P", "lugins", "w-[74px]"], ["Vect", "o", "r", "w-[67px] tracking-[-0.3px]"], ["", "R", "aster", "w-[66px] tracking-[-0.3px]"],
  ["", "D", "atabase", "w-[90px] tracking-[-0.2px]"], ["", "W", "eb", "w-[54px]"], ["", "M", "esh", "w-[60px]"], ["Pro", "c", "essing", "w-[102px] tracking-[-0.1px]"], ["", "H", "elp", "w-[50px]"],
];

export default function App() {
  return (
    <div className="relative h-[889px] w-[1248px] overflow-hidden bg-[#f7f7f7] font-['Open_Sans','Noto_Sans',sans-serif] text-[17px] leading-[20px] text-[#111]">
      <div className="flex h-full flex-col overflow-hidden rounded-[12px] border-2 border-b-[#999] border-l-[#b0b0b0] border-r-[#a4a4a4] border-t-[#b4b4b4] bg-[#f0f0f0]">
        <div className="flex h-[43px] shrink-0 items-center bg-[#f3f3f3] pb-[2px] pl-[11px]">
          <QLogo s={24} />
          <span className="ml-[5px]">Parcels_Multi_Select — QGIS</span>
          <svg width="160" height="18" viewBox="0 0 160 18" fill="none" stroke="#111" strokeWidth="1.400" className="ml-auto mr-[24px]"><path d="M1 9.500h15M142.500 2l14 14M156.500 2l-14 14" /><rect x="71.700" y="2.700" width="12.600" height="12.600" rx="1.500" /></svg>
        </div>
        <div className="flex h-[30px] shrink-0 items-center border-b border-[#d4d4d4] bg-[#f0f0f0] pl-[13px]">
          {menus.map(([a, u, b, w]) => (
            <span key={a + u + b} className={`shrink-0 whitespace-nowrap ${w}`}>{a}<span className="underline decoration-1 underline-offset-[3px]">{u}</span>{b}</span>
          ))}
        </div>
        <Toolbar1 />
        <Toolbar2 />
        <div className="flex h-[689px] shrink-0">
          <LeftColumn />
          <div className="flex w-[895px] shrink-0 flex-col">
            <div className="flex h-[350px] shrink-0 border-b border-l border-r border-[#b0b0b0]"><ParcelMap /></div>
            <div className="flex h-[34px] shrink-0 flex-col">
              <div className="flex h-[9px] shrink-0 items-center justify-center"><Dots /></div>
              <div className="flex items-center justify-between pl-[9px] pr-[1px] pt-[2px]">
                <span className="tracking-[-0.05px]">parcels — Features Total: 1904, Filtered: 1904, Selected: 0</span>
                <div className="-mt-[3px]"><DockButtons /></div>
              </div>
            </div>
            <TableToolbar />
            <AttributeTable />
            <div className="flex h-[37px] shrink-0 items-center pl-[3px] pr-[3px]">
              <div className="flex h-[31px] w-[173px] items-center rounded-[3px] border border-[#a9a9a9] bg-gradient-to-b from-white to-[#eeeeee] pl-[3px]">
                <Ic s={23}><TableIc /></Ic>
                <span className="ml-[2px] whitespace-nowrap text-[16px] tracking-[-0.25px]">Show All Features</span>
                <span className="ml-auto mr-[1px] mt-[13px]"><Arrow /></span>
              </div>
              <div className="ml-auto flex items-center">
                <Ic s={22}><rect x="1.500" y="1.500" width="21" height="21" fill="#dceaf8" stroke="#6a96c8" strokeWidth="1.200" /><path d="M4 8h4M4 16.500h4" stroke="#234" strokeWidth="1.800" /><rect x="10" y="5" width="10" height="5.500" rx="1.500" fill="#fff" stroke="#6a96c8" /><rect x="10" y="13.500" width="10" height="5.500" rx="1.500" fill="#fff" stroke="#6a96c8" /></Ic>
                <div className="ml-[5px] flex h-[31px] w-[32px] items-center justify-center rounded-[3px] border border-[#a9a9a9] bg-[#dcdcdc]"><Ic s={23}><TableIc /></Ic></div>
              </div>
            </div>
          </div>
        </div>
        <StatusBar />
      </div>
      <div className="absolute left-[1017px] top-[67px] h-[57px] w-[61px] rounded-[50%] border-[3px] border-[#ff3878]" />
      <div className="absolute left-[690px] top-[569px] h-[241px] w-[169px] border-4 border-[#f60000]" />
      <div className="absolute left-[989px] top-[566px] h-[245px] w-[169px] border-[4.500px] border-[#ff2a00]" />
    </div>
  );
}
